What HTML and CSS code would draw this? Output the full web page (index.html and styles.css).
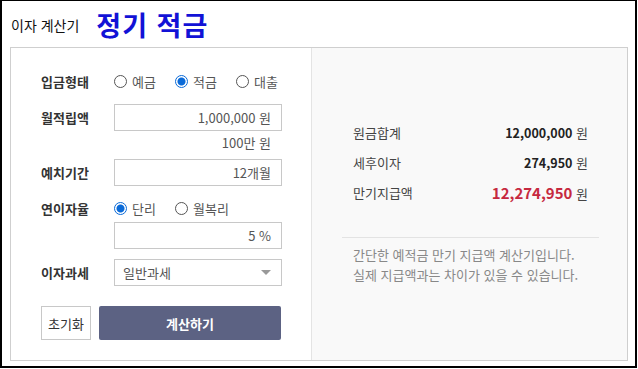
FILE: index.html
```html
<!DOCTYPE html>
<html lang="ko">
<head>
<meta charset="utf-8">
<link rel="stylesheet" href="styles.css">
</head>
<body>
<div class="frame">
  <header class="head">
    <span class="sub">이자 계산기</span>
    <h1 class="title">정기 적금</h1>
  </header>
  <div class="card">
    <div class="form">
      <div class="row">
        <span class="label">입금형태</span>
        <div class="radios">
          <span class="radio"><i class="dot"></i>예금</span>
          <span class="radio"><i class="dot on"></i>적금</span>
          <span class="radio"><i class="dot"></i>대출</span>
        </div>
      </div>
      <div class="row tight">
        <span class="label">월적립액</span>
        <div class="input">1,000,000 원</div>
      </div>
      <div class="hint">100만 원</div>
      <div class="row wide">
        <span class="label">예치기간</span>
        <div class="input">12개월</div>
      </div>
      <div class="row flush">
        <span class="label">연이자율</span>
        <div class="radios short">
          <span class="radio"><i class="dot on"></i>단리</span>
          <span class="radio"><i class="dot"></i>월복리</span>
        </div>
      </div>
      <div class="row wide">
        <span class="label"></span>
        <div class="input">5 %</div>
      </div>
      <div class="row last">
        <span class="label">이자과세</span>
        <div class="select">일반과세<i class="caret"></i></div>
      </div>
      <div class="buttons">
        <button class="reset">초기화</button>
        <button class="calc">계산하기</button>
      </div>
    </div>
    <div class="result">
      <div class="rrow"><span>원금합계</span><span class="val"><b>12,000,000</b> 원</span></div>
      <div class="rrow"><span>세후이자</span><span class="val"><b>274,950</b> 원</span></div>
      <div class="rrow"><span>만기지급액</span><span class="val"><b class="red">12,274,950</b> 원</span></div>
      <hr class="sep">
      <p class="note">간단한 예적금 만기 지급액 계산기입니다.<br>실제 지급액과는 차이가 있을 수 있습니다.</p>
    </div>
  </div>
</div>
</body>
</html>
```

FILE: styles.css
```css
* { box-sizing: border-box; }
html, body { margin: 0; padding: 0; background: #fff; }
body {
  font-family: "Noto Sans CJK KR", "Noto Sans", sans-serif;
  color: #333;
  font-size: 13px;
}
.frame {
  width: 637px;
  height: 368px;
  border: 2px solid #000;
  border-top-width: 1px;
  padding: 0 7px 0 8px;
}
.head {
  display: flex;
  align-items: center;
  height: 46px;
  padding-left: 1px;
}
.sub {
  font-size: 14px;
  color: #111;
  margin-top: 2px;
}
.title {
  margin: 0 0 0 17px;
  font-size: 27px;
  font-weight: 700;
  color: #1212d6;
  letter-spacing: 1px;
}
.card {
  display: flex;
  border: 1px solid #cfcfcf;
  height: 314px;
}
.form {
  width: 301px;
  border-right: 1px solid #e4e4e4;
  padding: 20px 0 0 30px;
}
.row {
  display: flex;
  align-items: center;
  margin-bottom: 9px;
}
.row.tight { margin-bottom: 0; }
.row.wide { margin-bottom: 10px; }
.row.flush { margin-bottom: 2px; }
.row.last { margin-bottom: 20px; }
.label {
  width: 73px;
  font-weight: 700;
  font-size: 13px;
  color: #333;
}
.radios {
  display: flex;
  height: 27px;
  align-items: center;
}
.radios.short { height: 24px; }
.radio {
  display: flex;
  align-items: center;
  width: 61px;
  color: #555;
}
.dot {
  width: 13px;
  height: 13px;
  border: 1px solid #555;
  border-radius: 50%;
  margin-right: 5px;
  display: inline-block;
}
.dot.on {
  border-color: #0a6ad8;
  background: radial-gradient(circle, #0a6ad8 0 3.5px, #fff 4.5px);
}
.input, .select {
  width: 168px;
  height: 27px;
  border: 1px solid #c8c8c8;
  display: flex;
  align-items: center;
  justify-content: flex-end;
  padding-right: 10px;
  color: #555;
  background: #fff;
}
.hint {
  width: 241px;
  height: 18px;
  line-height: 18px;
  text-align: right;
  color: #555;
  padding-right: 11px;
  margin: 3px 0 7px;
}
.select {
  justify-content: space-between;
  padding: 0 8px 0 8px;
}
.caret {
  width: 0; height: 0;
  border-left: 5px solid transparent;
  border-right: 5px solid transparent;
  border-top: 5px solid #999;
  margin-right: 2px;
}
.buttons {
  display: flex;
  gap: 8px;
}
button { font-family: inherit; font-size: 13px; }
.reset {
  width: 50px;
  height: 34px;
  border: 1px solid #c8c8c8;
  background: #fff;
  color: #333;
  padding: 0;
}
.calc {
  width: 182px;
  height: 34px;
  border: 0;
  border-radius: 2px;
  background: #5c6283;
  color: #fff;
  font-weight: 700;
}
.result {
  flex: 1;
  background: #f9f9f9;
  padding: 69px 28px 0 30px;
}
.rrow {
  display: flex;
  justify-content: space-between;
  align-items: center;
  height: 30px;
  padding: 0 11px;
  color: #444;
}
.val b { color: #222; font-size: 12.5px; }
.val b.red { color: #c6293f; font-size: 15px; }
.sep {
  border: 0;
  border-top: 1px solid #e3e3e3;
  margin: 30px 0 7px;
}
.note {
  margin: 0;
  padding-left: 11px;
  color: #888;
  line-height: 20px;
}
```
